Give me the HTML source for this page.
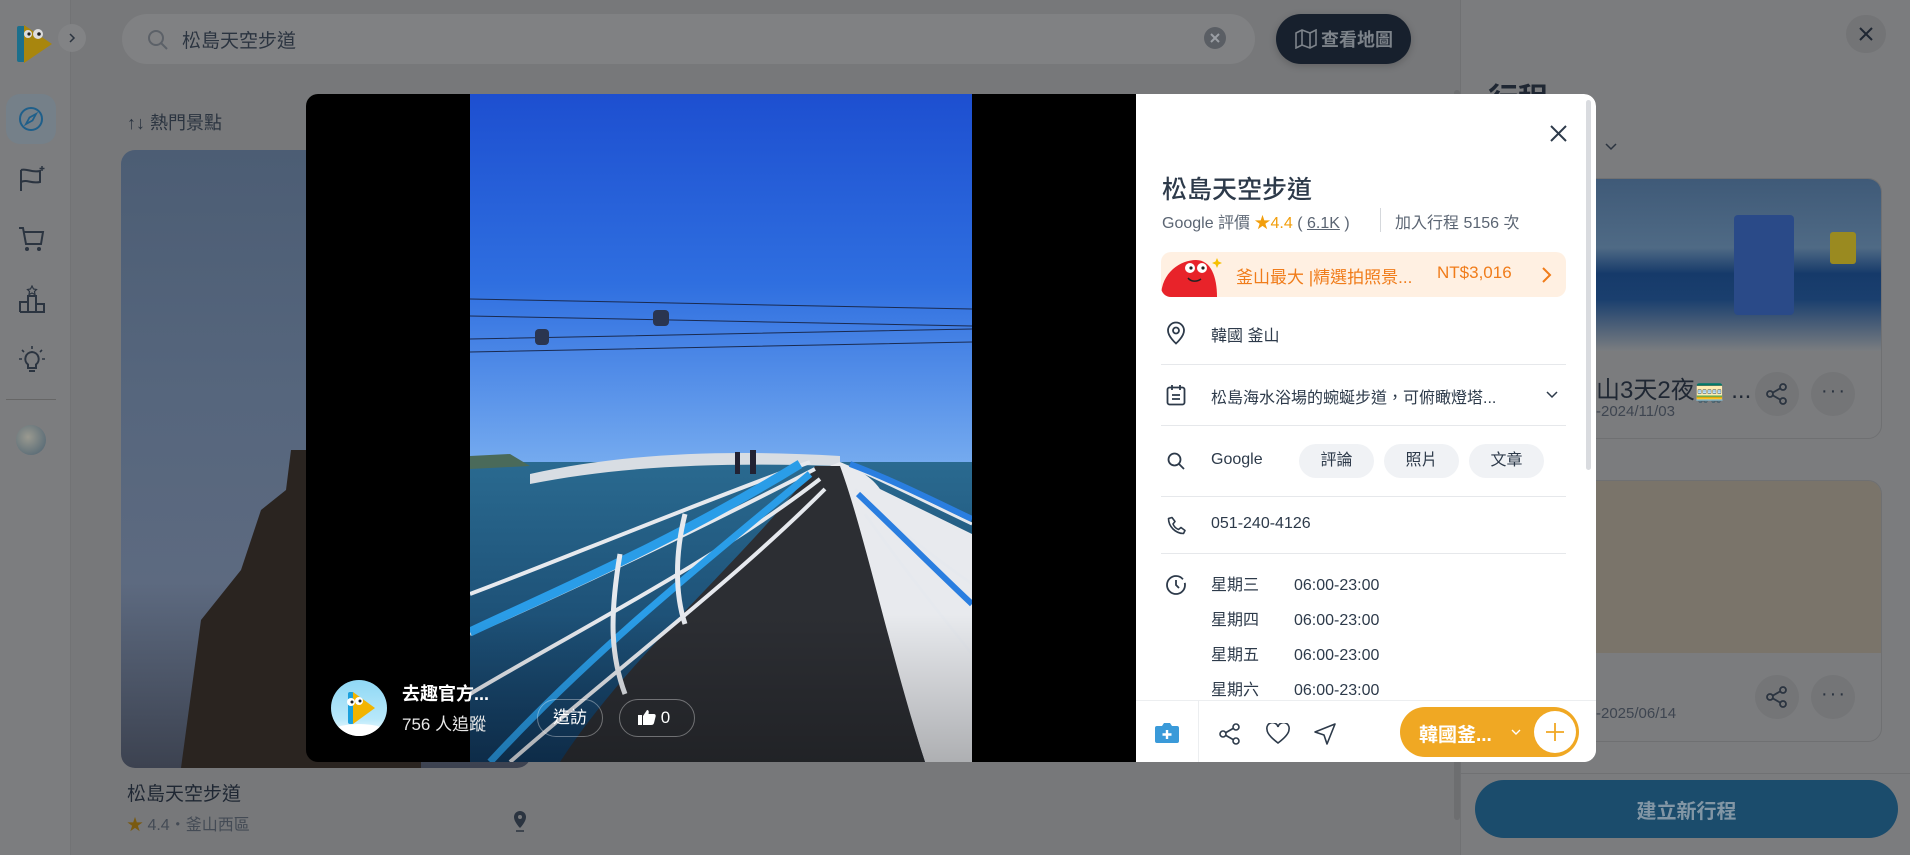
<!DOCTYPE html>
<html><head><meta charset="utf-8"><style>
*{margin:0;padding:0;box-sizing:border-box}
body{width:1910px;height:855px;overflow:hidden;background:#77787a;font-family:"Liberation Sans","Noto Sans CJK TC",sans-serif;position:relative}
.a{position:absolute}
.t{white-space:nowrap}
</style></head><body>
<!-- sidebar -->
<div class="a" style="left:0;top:0;width:71px;height:855px;background:#7c7d7f;border-right:1px solid #727375"></div>
<svg class="a" style="left:14px;top:22px" width="42" height="44" viewBox="0 0 42 44"><rect x="3" y="4" width="8" height="36" rx="2" fill="#1c6f8c"/><path d="M10 3 L38 22 L10 41 Z" fill="#a8860e"/><circle cx="14" cy="12" r="4" fill="#ddd"/><circle cx="24" cy="12" r="5" fill="#ddd"/><circle cx="15" cy="12" r="1.6" fill="#222"/><circle cx="25" cy="12" r="1.8" fill="#222"/></svg>
<div class="a" style="left:58px;top:24px;width:28px;height:28px;border-radius:14px;background:#828385"></div>
<svg class="a" style="left:66px;top:32px" width="12" height="12" viewBox="0 0 12 12"><path d="M4 2l4 4-4 4" stroke="#2b3440" stroke-width="1.5" fill="none"/></svg>
<div class="a" style="left:6px;top:94px;width:50px;height:50px;border-radius:14px;background:#758089"></div>
<svg class="a" style="left:17px;top:105px" width="28" height="28" viewBox="0 0 28 28"><circle cx="14" cy="14" r="11" stroke="#1f5f8a" stroke-width="2" fill="none"/><path d="M19 9 L15.5 15.5 L9 19 L12.5 12.5 Z" stroke="#1f5f8a" stroke-width="1.8" fill="none"/></svg>
<svg class="a" style="left:18px;top:165px" width="30" height="30" viewBox="0 0 30 30"><path d="M3 5 V26 M3 5 C9 3 13 8 22 6 V17 C13 19 9 14 3 17" stroke="#2b3440" stroke-width="2" fill="none"/><path d="M24 1v5M21.5 3.5h5" stroke="#2b3440" stroke-width="1.5"/></svg>
<svg class="a" style="left:18px;top:226px" width="28" height="28" viewBox="0 0 28 28"><path d="M1 2h4l3 16h15l2-12H6" stroke="#2b3440" stroke-width="2" fill="none"/><circle cx="9" cy="23" r="2" fill="#2b3440"/><circle cx="21" cy="23" r="2" fill="#2b3440"/></svg>
<svg class="a" style="left:19px;top:285px" width="26" height="28" viewBox="0 0 26 28"><path d="M1 27V17h8v10M9 27V11h8v16M17 27V19h8v8H1" stroke="#2b3440" stroke-width="2" fill="none"/><path d="M13 1l1.5 3 3 .5-2 2 .5 3-3-1.5-3 1.5.5-3-2-2 3-.5z" stroke="#2b3440" stroke-width="1.2" fill="none"/></svg>
<svg class="a" style="left:18px;top:345px" width="28" height="28" viewBox="0 0 28 28"><path d="M14 7a7 7 0 0 0-4 12.5V23h8v-3.5A7 7 0 0 0 14 7z M11 26h6" stroke="#2b3440" stroke-width="2" fill="none"/><path d="M14 1v3M4 5l2 2M24 5l-2 2M1 14h3M24 14h3" stroke="#2b3440" stroke-width="1.6"/></svg>
<div class="a" style="left:6px;top:399px;width:50px;height:1px;background:#666"></div>
<div class="a" style="left:16px;top:425px;width:30px;height:30px;border-radius:15px;background:radial-gradient(circle at 40% 40%,#9a9a90,#4a6070)"></div>
<!-- search -->
<div class="a" style="left:122px;top:14px;width:1133px;height:50px;border-radius:25px;background:#808183"></div>
<svg class="a" style="left:147px;top:29px" width="22" height="22" viewBox="0 0 22 22"><circle cx="9" cy="9" r="7" stroke="#5c6168" stroke-width="2" fill="none"/><path d="M14 14l6 6" stroke="#5c6168" stroke-width="2"/></svg>
<div class="a t" style="left:182px;top:26px;font-size:19px;color:#2b3440">松島天空步道</div>
<div class="a" style="left:1204px;top:27px;width:22px;height:22px;border-radius:11px;background:#5a5e64"></div>
<svg class="a" style="left:1209px;top:32px" width="12" height="12"><path d="M2 2l8 8M10 2l-8 8" stroke="#9a9ea4" stroke-width="2"/></svg>
<div class="a" style="left:1276px;top:14px;width:135px;height:50px;border-radius:25px;background:#17202d;box-shadow:0 2px 8px rgba(0,0,0,.2)"></div>
<svg class="a" style="left:1295px;top:29px" width="22" height="20" viewBox="0 0 22 20"><path d="M1 4l6-3 8 3 6-3v15l-6 3-8-3-6 3z M7 1v15 M15 4v15" stroke="#7d838a" stroke-width="1.6" fill="none"/></svg>
<div class="a t" style="left:1321px;top:26px;font-size:18px;font-weight:bold;color:#7d838a">查看地圖</div>
<!-- main list -->
<div class="a t" style="left:127px;top:109px;font-size:18px;color:#2b3440">↑↓ 熱門景點</div>
<div class="a" style="left:121px;top:150px;width:410px;height:618px;border-radius:14px;background:linear-gradient(180deg,#4c5d74 0%,#56667d 40%,#5d6a80 70%,#3c4250 100%);overflow:hidden">
<svg width="410" height="618"><path d="M60 618 L80 470 L120 420 L140 360 L165 340 L170 300 L195 300 L205 345 L225 380 L230 450 L250 520 L300 560 L300 618Z" fill="#2a2420"/></svg></div>
<div class="a t" style="left:127px;top:779px;font-size:19px;color:#1f2733">松島天空步道</div>
<div class="a t" style="left:127px;top:811px;font-size:16px;color:#444b55"><span style="color:#7a5a10">★</span> 4.4・釜山西區</div>
<svg class="a" style="left:512px;top:810px" width="16" height="22" viewBox="0 0 16 22"><path d="M8 1a6 6 0 0 0-6 6c0 5 6 11 6 11s6-6 6-11a6 6 0 0 0-6-6z" fill="#2b3440"/><circle cx="8" cy="7" r="2" fill="#77787a"/><path d="M4 21h8" stroke="#2b3440" stroke-width="1.5"/></svg>
<!-- right panel -->
<div class="a" style="left:1460px;top:0;width:450px;height:855px;background:#7b7c7e;border-left:1px solid #707173"></div>
<div class="a" style="left:1454px;top:90px;width:6px;height:730px;border-radius:3px;background:#6d6e70"></div>
<div class="a" style="left:1846px;top:15px;width:40px;height:38px;border-radius:19px;background:#737476"></div>
<svg class="a" style="left:1858px;top:26px" width="16" height="16"><path d="M2 2l12 12M14 2L2 14" stroke="#1f2733" stroke-width="2"/></svg>
<div class="a t" style="left:1488px;top:74px;font-size:30px;font-weight:bold;color:#1f2733">行程</div>
<svg class="a" style="left:1604px;top:142px" width="14" height="10"><path d="M2 2l5 5 5-5" stroke="#2b3440" stroke-width="1.5" fill="none"/></svg>
<div class="a" style="left:1470px;top:178px;width:412px;height:261px;border-radius:14px;border:1px solid #6f7072;overflow:hidden">
<div style="height:172px;background:linear-gradient(180deg,#3f5a78 0%,#4f6a85 40%,#163a6a 55%,#1a3f6e 70%,#7a7d80 100%)"></div></div>
<div class="a" style="left:1734px;top:215px;width:60px;height:100px;background:#2a4a88;border-radius:4px"></div>
<div class="a" style="left:1830px;top:232px;width:26px;height:32px;background:#9a8a20;border-radius:3px"></div>
<div class="a t" style="left:1596px;top:370px;font-size:24px;color:#1f2733">山3天2夜🚃 ...</div>
<div class="a t" style="left:1596px;top:403px;font-size:15px;color:#3e4550">-2024/11/03</div>
<div class="a" style="left:1755px;top:372px;width:44px;height:44px;border-radius:22px;background:#747577"></div>
<div class="a" style="left:1811px;top:372px;width:44px;height:44px;border-radius:22px;background:#747577"></div>
<div class="a" style="left:1470px;top:480px;width:412px;height:262px;border-radius:14px;border:1px solid #6f7072;overflow:hidden">
<div style="height:172px;background:#7a746a"></div></div>
<div class="a t" style="left:1596px;top:705px;font-size:15px;color:#3e4550">-2025/06/14</div>
<div class="a" style="left:1755px;top:675px;width:44px;height:44px;border-radius:22px;background:#747577"></div>
<div class="a" style="left:1811px;top:675px;width:44px;height:44px;border-radius:22px;background:#747577"></div>
<svg class="a" style="left:1765px;top:382px" width="24" height="24" viewBox="0 0 24 24"><circle cx="5" cy="12" r="3" stroke="#2b3440" stroke-width="1.8" fill="none"/><circle cx="18" cy="5" r="3" stroke="#2b3440" stroke-width="1.8" fill="none"/><circle cx="18" cy="19" r="3" stroke="#2b3440" stroke-width="1.8" fill="none"/><path d="M8 10.5l7-4M8 13.5l7 4" stroke="#2b3440" stroke-width="1.8"/></svg>
<svg class="a" style="left:1765px;top:685px" width="24" height="24" viewBox="0 0 24 24"><circle cx="5" cy="12" r="3" stroke="#2b3440" stroke-width="1.8" fill="none"/><circle cx="18" cy="5" r="3" stroke="#2b3440" stroke-width="1.8" fill="none"/><circle cx="18" cy="19" r="3" stroke="#2b3440" stroke-width="1.8" fill="none"/><path d="M8 10.5l7-4M8 13.5l7 4" stroke="#2b3440" stroke-width="1.8"/></svg>
<div class="a t" style="left:1821px;top:380px;font-size:20px;color:#2b3440;letter-spacing:2px">···</div>
<div class="a t" style="left:1821px;top:683px;font-size:20px;color:#2b3440;letter-spacing:2px">···</div>
<div class="a" style="left:1460px;top:773px;width:450px;height:1px;background:#707173"></div>
<div class="a" style="left:1475px;top:780px;width:423px;height:58px;border-radius:29px;background:#1b4c6c"></div>
<div class="a t" style="left:1475px;top:795px;width:423px;text-align:center;font-size:20px;font-weight:bold;color:#8296a5">建立新行程</div>
<!-- modal -->
<div class="a" style="left:306px;top:94px;width:1290px;height:668px;border-radius:12px;background:#000;overflow:hidden">
<svg class="a" style="left:164px;top:0" width="502" height="668" viewBox="0 0 502 668">
<defs><linearGradient id="sky" x1="0" y1="0" x2="0" y2="1"><stop offset="0" stop-color="#1d4fd0"/><stop offset=".5" stop-color="#2f6fe0"/><stop offset="1" stop-color="#79aef0"/></linearGradient>
<linearGradient id="sea" x1="0" y1="0" x2="0" y2="1"><stop offset="0" stop-color="#2a6a90"/><stop offset="1" stop-color="#123a60"/></linearGradient></defs>
<rect width="502" height="380" fill="url(#sky)"/>
<rect y="368" width="502" height="300" fill="url(#sea)"/>
<path d="M0 205 L502 215 M0 222 L502 232 M0 245 L502 235 M0 258 L502 248" stroke="#1a2a50" stroke-width="1"/>
<rect x="65" y="235" width="14" height="16" rx="4" fill="#2a3550"/><rect x="183" y="216" width="16" height="16" rx="4" fill="#2a3550"/>
<path d="M0 362 L40 360 L60 372 L0 375Z" fill="#4a6a5a"/>
<path d="M60 380 C150 360 250 355 370 362 L370 372 C250 368 150 372 60 390Z" fill="#d8dde3"/>
<path d="M370 368 C380 372 400 380 410 395 L502 440 L502 668 L455 668 C420 560 390 450 360 372Z" fill="#e8eaee"/>
<path d="M345 372 L370 372 C395 440 420 560 455 668 L90 668 C160 560 280 460 345 372Z" fill="#2c2e33"/>
<path d="M0 500 C80 470 200 420 340 368 M0 540 C80 505 220 440 345 375 M0 600 C100 540 240 470 350 385 M40 668 C140 580 260 490 355 395" stroke="#e6e9ee" stroke-width="4" fill="none"/>
<path d="M0 538 C80 500 200 450 330 370" stroke="#2a9de8" stroke-width="9" fill="none"/>
<path d="M20 668 C120 560 220 480 340 380" stroke="#2a9de8" stroke-width="7" fill="none"/>
<path d="M380 372 C420 390 460 410 502 430 M385 395 C420 430 460 460 502 490 M395 420 C430 470 470 520 502 560" stroke="#e6e9ee" stroke-width="3" fill="none"/>
<path d="M380 370 C420 385 460 405 502 425 M388 400 C430 440 470 480 502 510" stroke="#2a7ee0" stroke-width="6" fill="none"/>
<path d="M150 460 C140 520 140 560 155 600 M215 420 C205 460 205 500 215 530" stroke="#e6e9ee" stroke-width="5" fill="none"/>
<rect x="265" y="358" width="5" height="22" fill="#223"/><rect x="280" y="356" width="6" height="24" fill="#223"/>
</svg>
<div class="a" style="left:0;top:520px;width:830px;height:148px;background:linear-gradient(180deg,rgba(0,0,0,0),rgba(0,0,0,.25))"></div>
<div class="a" style="left:25px;top:586px;width:56px;height:56px;border-radius:28px;background:linear-gradient(180deg,#8fd8f5 0%,#b8e8fa 70%,#fff 100%);overflow:hidden">
<svg width="56" height="56" viewBox="0 0 56 56"><rect x="17" y="12" width="6" height="32" rx="2" fill="#1aa0dd"/><path d="M22 12 L44 28 L22 44Z" fill="#f2b400"/><circle cx="20" cy="22" r="4" fill="#fff"/><circle cx="28" cy="21" r="4" fill="#fff"/><circle cx="21" cy="22" r="1.5" fill="#222"/><circle cx="29" cy="21" r="1.5" fill="#222"/><ellipse cx="28" cy="54" rx="30" ry="10" fill="#fff"/></svg></div>
<div class="a t" style="left:96px;top:586px;font-size:18px;font-weight:bold;color:#fff">去趣官方...</div>
<div class="a t" style="left:96px;top:616px;font-size:17px;color:#e8e8e8">756 人追蹤</div>
<div class="a t" style="left:231px;top:605px;width:66px;height:38px;border-radius:19px;border:1px solid rgba(255,255,255,.35);color:#fff;font-size:17px;text-align:center;line-height:36px">造訪</div>
<div class="a t" style="left:313px;top:605px;width:76px;height:38px;border-radius:19px;border:1px solid rgba(255,255,255,.35);color:#fff;font-size:17px;line-height:36px;padding-left:18px"><svg width="18" height="16" viewBox="0 0 18 16" style="vertical-align:-2px"><rect x="0" y="6" width="4" height="10" fill="#fff"/><path d="M5 7 L9 1 C11 1 11 3 10.5 5 L16 5 C17.5 5 18 6.5 17.5 8 L16 14 C15.5 15.5 14.5 16 13 16 L5 16Z" fill="#fff"/></svg> 0</div>
<!-- info panel -->
<div class="a" style="left:830px;top:0;width:460px;height:668px;background:#fff">
<div class="a" style="left:450px;top:6px;width:5px;height:370px;border-radius:3px;background:#d9dbdf"></div>
<svg class="a" style="left:414px;top:31px" width="17" height="17"><path d="M1 1l15 15M16 1L1 16" stroke="#2d3a4a" stroke-width="2"/></svg>
<div class="a t" style="left:26px;top:76px;font-size:25px;font-weight:500;color:#2d3a4a">松島天空步道</div>
<div class="a t" style="left:26px;top:115px;font-size:16px;color:#5b6573">Google 評價 <span style="color:#f29e0c">★4.4</span> ( <u>6.1K</u> )</div>
<div class="a" style="left:244px;top:114px;width:1px;height:24px;background:#d5d8dc"></div>
<div class="a t" style="left:259px;top:115px;font-size:16px;color:#5b6573">加入行程 5156 次</div>
<div class="a" style="left:25px;top:158px;width:405px;height:45px;border-radius:10px;background:#fff0e2;overflow:hidden">
<svg class="a" style="left:0;top:0" width="70" height="45" viewBox="0 0 70 45"><path d="M0 45 C0 20 20 8 35 8 C50 8 56 25 56 45Z" fill="#e8232a"/><circle cx="29" cy="16" r="5" fill="#fff"/><circle cx="41" cy="16" r="5" fill="#fff"/><circle cx="30" cy="16" r="1.6" fill="#222"/><circle cx="42" cy="16" r="1.6" fill="#222"/><path d="M27 26 C30 30 36 30 40 27" stroke="#222" stroke-width="1.5" fill="none"/><path d="M56 6 l1.5 3.5 3.5 1.5-3.5 1.5-1.5 3.5-1.5-3.5-3.5-1.5 3.5-1.5z" fill="#f6c000"/></svg>
<div class="a t" style="left:75px;top:11px;font-size:17px;color:#f07c1a">釜山最大 |精選拍照景...</div>
<div class="a t" style="left:276px;top:11px;font-size:17px;font-weight:500;color:#f07c1a">NT$3,016</div>
<svg class="a" style="left:380px;top:14px" width="12" height="18"><path d="M2 2l7 7-7 7" stroke="#f07c1a" stroke-width="2" fill="none"/></svg>
</div>
<svg class="a" style="left:30px;top:227px" width="20" height="24" viewBox="0 0 20 24"><path d="M10 1.5a8 8 0 0 0-8 8c0 6 8 13 8 13s8-7 8-13a8 8 0 0 0-8-8z" stroke="#2d3a4a" stroke-width="1.8" fill="none"/><circle cx="10" cy="9.5" r="3" stroke="#2d3a4a" stroke-width="1.8" fill="none"/></svg>
<div class="a t" style="left:75px;top:228px;font-size:16px;color:#2d3a4a">韓國 釜山</div>
<div class="a" style="left:25px;top:270px;width:405px;height:1px;background:#e6e8eb"></div>
<svg class="a" style="left:30px;top:290px" width="20" height="22" viewBox="0 0 20 22"><rect x="1.5" y="3.5" width="17" height="17" rx="2" stroke="#2d3a4a" stroke-width="1.8" fill="none"/><path d="M6 1v5M14 1v5M6 11h8M6 15h8" stroke="#2d3a4a" stroke-width="1.8"/></svg>
<div class="a t" style="left:75px;top:290px;font-size:16px;color:#2d3a4a">松島海水浴場的蜿蜒步道，可俯瞰燈塔...</div>
<svg class="a" style="left:410px;top:297px" width="12" height="8"><path d="M1 1l5 5 5-5" stroke="#2d3a4a" stroke-width="1.5" fill="none"/></svg>
<div class="a" style="left:25px;top:331px;width:405px;height:1px;background:#e6e8eb"></div>
<svg class="a" style="left:31px;top:358px" width="18" height="18"><circle cx="7.5" cy="7.5" r="6" stroke="#2d3a4a" stroke-width="1.8" fill="none"/><path d="M12 12l5 5" stroke="#2d3a4a" stroke-width="1.8"/></svg>
<div class="a t" style="left:75px;top:357px;font-size:16px;color:#2d3a4a">Google</div>
<div class="a t" style="left:163px;top:350px;width:75px;height:34px;border-radius:17px;background:#f0f2f5;text-align:center;line-height:34px;font-size:16px;color:#2d3a4a">評論</div>
<div class="a t" style="left:248px;top:350px;width:75px;height:34px;border-radius:17px;background:#f0f2f5;text-align:center;line-height:34px;font-size:16px;color:#2d3a4a">照片</div>
<div class="a t" style="left:333px;top:350px;width:75px;height:34px;border-radius:17px;background:#f0f2f5;text-align:center;line-height:34px;font-size:16px;color:#2d3a4a">文章</div>
<div class="a" style="left:25px;top:402px;width:405px;height:1px;background:#e6e8eb"></div>
<svg class="a" style="left:31px;top:422px" width="20" height="20" viewBox="0 0 20 20"><path d="M5 1.5l3 4-2 2.5c1 2.5 3 4.5 5.5 5.5l2.5-2 4 3-1.5 3c-8 0-15-7-15-15z" stroke="#2d3a4a" stroke-width="1.6" fill="none" stroke-linejoin="round"/></svg>
<div class="a t" style="left:75px;top:421px;font-size:16px;color:#2d3a4a">051-240-4126</div>
<div class="a" style="left:25px;top:459px;width:405px;height:1px;background:#e6e8eb"></div>
<svg class="a" style="left:29px;top:480px" width="22" height="22"><circle cx="11" cy="11" r="9" stroke="#2d3a4a" stroke-width="1.8" fill="none" stroke-dasharray="50 4"/><path d="M11 6v5l3 3" stroke="#2d3a4a" stroke-width="1.8" fill="none"/></svg>
<div class="a" style="left:75px;top:474px;font-size:16px;color:#2d3a4a;line-height:35px;white-space:nowrap">星期三<br>星期四<br>星期五<br>星期六</div>
<div class="a" style="left:158px;top:474px;font-size:16px;color:#2d3a4a;line-height:35px;white-space:nowrap">06:00-23:00<br>06:00-23:00<br>06:00-23:00<br>06:00-23:00</div>
<div class="a" style="left:0;top:606px;width:460px;height:62px;background:#fff;border-top:1px solid #eceef0"></div>
<div class="a" style="left:62px;top:607px;width:1px;height:61px;background:#eceef0"></div>
<svg class="a" style="left:18px;top:628px" width="26" height="22" viewBox="0 0 26 22"><path d="M3 4h5l2-3h6l2 3h5a2 2 0 0 1 2 2v13a2 2 0 0 1-2 2H3a2 2 0 0 1-2-2V6a2 2 0 0 1 2-2z" fill="#3a9ad9"/><path d="M13 8v9M8.5 12.5h9" stroke="#fff" stroke-width="2.4"/></svg>
<svg class="a" style="left:82px;top:628px" width="24" height="24" viewBox="0 0 24 24"><circle cx="5" cy="12" r="3" stroke="#2d3a4a" stroke-width="1.6" fill="none"/><circle cx="18" cy="5" r="3" stroke="#2d3a4a" stroke-width="1.6" fill="none"/><circle cx="18" cy="19" r="3" stroke="#2d3a4a" stroke-width="1.6" fill="none"/><path d="M8 10.5l7-4M8 13.5l7 4" stroke="#2d3a4a" stroke-width="1.6"/></svg>
<svg class="a" style="left:130px;top:629px" width="24" height="22" viewBox="0 0 24 22"><path d="M12 20 C4 14 1 10 1 6.5 A5 5 0 0 1 12 4 A5 5 0 0 1 23 6.5 C23 10 20 14 12 20Z" stroke="#2d3a4a" stroke-width="1.6" fill="none"/></svg>
<svg class="a" style="left:177px;top:628px" width="24" height="24" viewBox="0 0 24 24"><path d="M22 2L2 10l9 3 3 9z" stroke="#2d3a4a" stroke-width="1.6" fill="none" stroke-linejoin="round"/></svg>
<div class="a" style="left:264px;top:613px;width:179px;height:50px;border-radius:25px;background:#f0a823"></div>
<div class="a t" style="left:283px;top:626px;font-size:19px;font-weight:bold;color:#fff">韓國釜...</div>
<svg class="a" style="left:375px;top:635px" width="10" height="7"><path d="M1 1l4 4 4-4" stroke="#fff" stroke-width="1.4" fill="none"/></svg>
<div class="a" style="left:398px;top:617px;width:42px;height:42px;border-radius:21px;background:#fff"></div>
<svg class="a" style="left:409px;top:628px" width="20" height="20"><path d="M10 1v18M1 10h18" stroke="#f0a823" stroke-width="1.8"/></svg>
</div>
</div>
</body></html>
